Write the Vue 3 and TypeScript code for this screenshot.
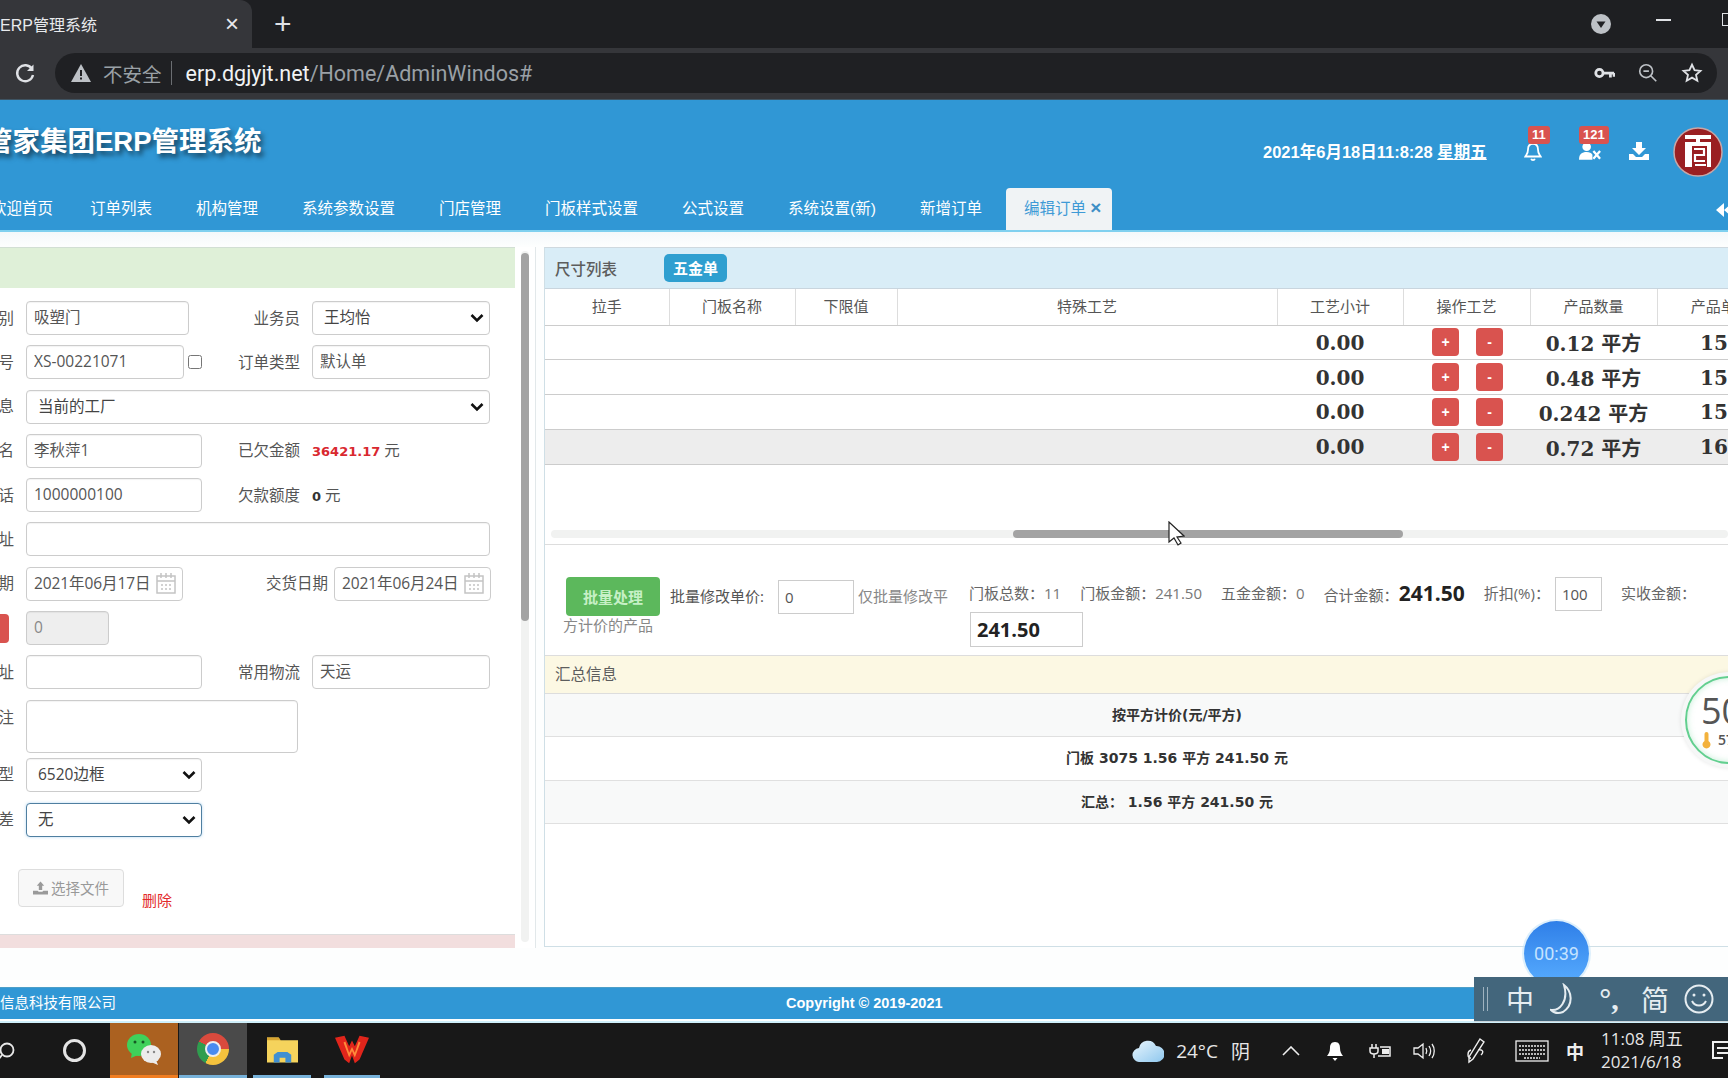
<template>
  <div class="screen">
    <!-- browser chrome -->
    <div class="tabstrip">
      <div class="tab">
        <span class="tab-title">ERP管理系统</span>
        <span class="tab-x">×</span>
      </div>
      <span class="tab-plus">+</span>
      <div class="strip-right">
        <svg class="profile" viewBox="0 0 20 20"><circle cx="10" cy="10" r="10" fill="#bdc1c6" /><path d="M5.5 7.5h9L10 14z" fill="#202124" /></svg>
        <span class="win-min"></span>
        <span class="win-max"></span>
      </div>
    </div>
    <div class="toolbar">
      <svg class="reload" viewBox="0 0 24 24" fill="none" stroke="#dfe1e5" stroke-width="2.4"><path d="M19 8a8 8 0 1 0 1 6" /><path d="M20.5 3.5v6.5h-6.5z" fill="#dfe1e5" stroke="none" /></svg>
      <div class="urlbar">
        <svg class="warn" viewBox="0 0 20 18"><path d="M10 0l10 18H0z" fill="#bdc1c6" /><path d="M9 6h2v6H9zM9 13.5h2v2H9z" fill="#202124" /></svg>
        <span class="insecure">不安全</span>
        <span class="url-sep"></span>
        <span class="url-host">erp.dgjyjt.net</span><span class="url-path">/Home/AdminWindos#</span>
        <div class="url-icons">
          <svg viewBox="0 0 24 24" width="22" height="22" fill="none" stroke="#dfe1e5" stroke-width="3"><circle cx="7" cy="12" r="4" /><path d="M11 12h12M19 12v5M23 12v4" /></svg>
          <svg viewBox="0 0 24 24" width="22" height="22" fill="none" stroke="#bdc1c6" stroke-width="1.8"><circle cx="10" cy="10" r="7" /><path d="M15 15l6 6M7 10h6" /></svg>
          <svg viewBox="0 0 24 24" width="22" height="22" fill="none" stroke="#dfe1e5" stroke-width="2"><path d="M12 3l2.8 6 6.4.7-4.8 4.3 1.4 6.4L12 17.1l-5.8 3.3 1.4-6.4L2.800 9.700 9.200 9z" /></svg>
        </div>
      </div>
    </div>

    <!-- app header -->
    <header class="app-header">
      <div class="hd-top">
        <h1 class="brand">管家集团ERP管理系统</h1>
        <div class="hd-right">
          <span class="clock">2021年6月18日11:8:28 <u>星期五</u></span>
          <span class="hd-icon bell">
            <svg viewBox="0 0 20 22" width="18" height="20" fill="none" stroke="#fff" stroke-width="2"><path d="M10 2c-4 0-5.500 3-5.500 6 0 5-2 6-3 8h17c-1-2-3-3-3-8 0-3-1.500-6-5.500-6zM8 18.500c.5 2 3.500 2 4 0" /></svg>
            <b class="badge">11</b>
          </span>
          <span class="hd-icon user">
            <svg viewBox="0 0 24 18" width="23" height="18" fill="#fff"><circle cx="8" cy="4.500" r="4.500" /><path d="M0 18c0-6 3-8 8-8 3 0 5 1 6 3v5z" /><path d="M15 9l7 8M22 9l-7 8" stroke="#fff" stroke-width="2.400" /></svg>
            <b class="badge">121</b>
          </span>
          <span class="hd-icon dl">
            <svg viewBox="0 0 20 18" width="20" height="18" fill="#fff"><path d="M7 0h6v6h4l-7 7-7-7h4z" /><path d="M0 12h4l3 3h6l3-3h4v6H0z" /></svg>
          </span>
          <svg class="avatar" viewBox="0 0 50 50">
            <circle cx="25" cy="25" r="24" fill="#9a1f22" stroke="#c9a6a6" stroke-width="1.500" />
            <path d="M12 8h26v4H27v3h11v25h-4V19H19v21h-7V15h11v-3H12z" fill="#fff" />
            <path d="M21 22h11M31 22v6H22v6h10M22 38h11" fill="none" stroke="#fff" stroke-width="2.200" />
          </svg>
        </div>
      </div>
      <nav class="nav">
        <a v-for="item in navItems" :key="item" class="nav-item">{{ item }}</a>
        <a class="nav-item active">编辑订单 <b class="nav-x">×</b></a>
        <svg class="nav-back" viewBox="0 0 16 14" width="16" height="14" fill="#fff"><path d="M8 0v14L0 7zM16 0v14L8 7z" /></svg>
      </nav>
    </header>

    <main class="main">
      <!-- order form -->
      <section class="left-panel">
        <div class="left-body">
          <div class="green-head"></div>
          <div class="form">
            <div class="row">
              <label class="lab">别</label>
              <input class="ctl w163" value="吸塑门" readonly />
              <label class="lab2">业务员</label>
              <select class="ctl"><option>王均怡</option></select>
            </div>
            <div class="row">
              <label class="lab">号</label>
              <div class="pair">
                <input class="ctl w158" value="XS-00221071" readonly />
                <input class="chk" type="checkbox" />
              </div>
              <label class="lab2">订单类型</label>
              <input class="ctl" value="默认单" readonly />
            </div>
            <div class="row">
              <label class="lab">息</label>
              <select class="ctl span3"><option>当前的工厂</option></select>
            </div>
            <div class="row">
              <label class="lab">名</label>
              <input class="ctl" value="李秋萍1" readonly />
              <label class="lab2">已欠金额</label>
              <span class="val"><b class="debt">36421.17</b> 元</span>
            </div>
            <div class="row">
              <label class="lab">话</label>
              <input class="ctl" value="1000000100" readonly />
              <label class="lab2">欠款额度</label>
              <span class="val"><b>0</b> 元</span>
            </div>
            <div class="row">
              <label class="lab">址</label>
              <input class="ctl span3" readonly />
            </div>
            <div class="row">
              <label class="lab">期</label>
              <div class="date w157">
                <span>2021年06月17日</span>
                <svg viewBox="0 0 20 22" width="20" height="22" fill="none" stroke="#c4c4c4" stroke-width="1.500"><rect x="1" y="4" width="18" height="17" /><path d="M1 9h18M5 1v5M10 1v5M15 1v5M5 13h2M9 13h2M13 13h2M5 17h2M9 17h2M13 17h2" /></svg>
              </div>
              <div class="date-end">
                <label class="lab3">交货日期</label>
                <div class="date w157">
                  <span>2021年06月24日</span>
                  <svg viewBox="0 0 20 22" width="20" height="22" fill="none" stroke="#c4c4c4" stroke-width="1.500"><rect x="1" y="4" width="18" height="17" /><path d="M1 9h18M5 1v5M10 1v5M15 1v5M5 13h2M9 13h2M13 13h2M5 17h2M9 17h2M13 17h2" /></svg>
                </div>
              </div>
            </div>
            <div class="row">
              <span class="red-stub"></span>
              <input class="ctl w83 disabled" value="0" readonly />
            </div>
            <div class="row">
              <label class="lab">址</label>
              <input class="ctl" readonly />
              <label class="lab2">常用物流</label>
              <input class="ctl" value="天运" readonly />
            </div>
            <div class="row tall">
              <label class="lab top">注</label>
              <textarea class="ctl note" readonly></textarea>
            </div>
            <div class="row tight">
              <label class="lab">型</label>
              <select class="ctl"><option>6520边框</option></select>
            </div>
            <div class="row">
              <label class="lab">差</label>
              <select class="ctl focused"><option>无</option></select>
            </div>
          </div>
          <div class="file-row">
            <button class="file-btn">
              <svg viewBox="0 0 16 14" width="15" height="14" fill="#9a9a9a"><path d="M8 0l4 4.500H9.800V9H6.200V4.500H4zM0 10h5l1 1h4l1-1h5v4H0z" /></svg>
              选择文件
            </button>
            <a class="del">删除</a>
          </div>
          <div class="red-foot"></div>
        </div>
        <div class="v-scroll"><span class="v-thumb"></span></div>
      </section>

      <!-- size list -->
      <section class="right-panel">
        <div class="blue-head">
          <span class="head-title">尺寸列表</span>
          <span class="hw-badge">五金单</span>
        </div>
        <div class="table-wrap">
          <table class="sizes">
            <colgroup>
              <col v-for="(w, i) in colWidths" :key="i" :style="{ width: w + 'px' }" />
            </colgroup>
            <thead>
              <tr><th v-for="h in columns" :key="h">{{ h }}</th></tr>
            </thead>
            <tbody>
              <tr v-for="(r, i) in rows" :key="i" :class="{ hl: i === 3 }">
                <td></td><td></td><td></td><td></td>
                <td class="num">0.00</td>
                <td class="ops"><button class="op">+</button><button class="op">-</button></td>
                <td class="num">{{ r.qty }} <span class="unit">平方</span></td>
                <td class="num price">{{ r.price }}</td>
              </tr>
            </tbody>
          </table>
          <div class="h-scroll"><span class="h-thumb"></span></div>
        </div>

        <div class="batch">
          <div class="batch-left">
            <div class="batch-line">
              <button class="batch-btn">批量处理</button>
              <span class="dark">批量修改单价:</span>
              <input class="box w76" value="0" readonly />
              <span class="muted">仅批量修改平</span>
            </div>
            <div class="muted second">方计价的产品</div>
          </div>
          <div class="batch-right">
            <div class="totals">
              <span>门板总数：<em>11</em></span>
              <span>门板金额：<em>241.50</em></span>
              <span>五金金额：<em>0</em></span>
              <span>合计金额：<b class="big">241.50</b></span>
              <span>折扣(%)：</span>
              <input class="box w47" value="100" readonly />
              <span class="receipt">实收金额：</span>
            </div>
            <input class="box paid" value="241.50" readonly />
          </div>
        </div>

        <div class="yellow-head">汇总信息</div>
        <div class="summary">
          <div class="sum-row stripe">按平方计价(元/平方)</div>
          <div class="sum-row">门板 3075 1.56 平方 241.50 元</div>
          <div class="sum-row stripe">汇总： 1.56 平方 241.50 元</div>
        </div>
      </section>
    </main>

    <footer class="footer">
      <span class="foot-left">信息科技有限公司</span>
      <span class="foot-mid">Copyright © 2019-2021</span>
    </footer>

    <!-- windows taskbar -->
    <div class="taskbar">
      <div class="tb-search">
        <svg viewBox="0 0 20 20" width="20" height="20" fill="none" stroke="#e8e8e8" stroke-width="1.800" class="tb-glass"><circle cx="11" cy="9" r="6.500" /><path d="M6 14l-4 5" /></svg>
        <span class="tb-ring"></span>
      </div>
      <div class="tb-app wechat">
        <svg viewBox="0 0 36 32" width="36" height="32">
          <ellipse cx="13" cy="12" rx="12" ry="11" fill="#3fd15a" />
          <path d="M6 19l-1 6 7-3z" fill="#3fd15a" />
          <circle cx="9" cy="9" r="1.500" fill="#155a24" /><circle cx="17" cy="9" r="1.500" fill="#155a24" />
          <ellipse cx="25" cy="21" rx="10" ry="9" fill="#ececec" />
          <path d="M30 27l2 5-7-3z" fill="#ececec" />
          <circle cx="22" cy="19" r="1.200" fill="#888" /><circle cx="28" cy="19" r="1.200" fill="#888" />
        </svg>
      </div>
      <div class="tb-app chrome-app">
        <span class="chrome-ball"><i></i></span>
      </div>
      <div class="tb-app explorer">
        <svg viewBox="0 0 32 28" width="31" height="28">
          <path d="M0 2h12l2 3h18v23H0z" fill="#f5d35c" />
          <path d="M0 2h12l2 3H0z" fill="#d7a431" />
          <path d="M7 28v-8l4-3h10l4 3v8h-6v-5h-6v5z" fill="#3f8fd2" />
        </svg>
      </div>
      <div class="tb-app wps">
        <svg viewBox="0 0 36 30" width="34" height="30">
          <path d="M0 3l10-2 5 11 3-6 3 6 5-11 10 2-10 23-5 4-3-8-3 8-5-4z" fill="#e1251b" />
          <path d="M11 7l4 12 3-6 3 6 4-12 2 1-6 16-3-7-3 7-6-16z" fill="#ff8a3a" />
        </svg>
      </div>
      <div class="tray">
        <svg class="t-cloud" viewBox="0 0 32 22" width="32" height="22">
          <defs><linearGradient id="cloudFill" x1="0" y1="0" x2="1" y2="1"><stop offset="0" stop-color="#eaf6fd" /><stop offset="1" stop-color="#8ec7ee" /></linearGradient></defs>
          <path d="M8 22a7 7 0 0 1-1-14 9 9 0 0 1 17-2 8 8 0 0 1 1 16z" fill="url(#cloudFill)" />
        </svg>
        <span class="t-temp">24°C</span>
        <span class="t-sky">阴</span>
        <svg class="t-up" viewBox="0 0 18 10" width="18" height="10" fill="none" stroke="#eee" stroke-width="1.600"><path d="M1 9l8-8 8 8" /></svg>
        <svg class="t-bell" viewBox="0 0 18 20" width="18" height="20" fill="#fff"><path d="M9 1c-4 0-5 3-5 6 0 4-1.500 6-3 8h16c-1.500-2-3-4-3-8 0-3-1-6-5-6zM6.500 17h5L9 20z" /></svg>
        <svg class="t-batt" viewBox="0 0 24 16" width="24" height="16" fill="none" stroke="#eee" stroke-width="1.500"><path d="M4 1v4M8 1v4M2 5h8v3c0 2-2 3-4 3s-4-1-4-3zM6 11v4M12 4h10v9H10" /><rect x="14" y="6" width="7" height="5" fill="#eee" stroke="none" /></svg>
        <svg class="t-vol" viewBox="0 0 22 18" width="22" height="18" fill="none" stroke="#eee" stroke-width="1.300"><path d="M1 6h4l5-4v14l-5-4H1zM13 6c1 2 1 4 0 6M16 4c2 3 2 7 0 10M19 2c3 4 3 10 0 14" /></svg>
        <svg class="t-pen" viewBox="0 0 20 26" width="20" height="26" fill="none" stroke="#eee" stroke-width="1.400"><path d="M14 1l4 3-11 17-4 3 0-5zM5 12c-4 1-4 8 0 8M12 12c5-1 6 2 3 5" /></svg>
        <svg class="t-kbd" viewBox="0 0 34 22" width="34" height="22" fill="none" stroke="#eee" stroke-width="1.300"><rect x="1" y="1" width="32" height="20" /><path d="M4 6h26M4 10h26M4 14h26M9 18h16" stroke-dasharray="2 1" /></svg>
        <span class="t-ime">中</span>
        <div class="t-time"><span>11:08 周五</span><span>2021/6/18</span></div>
        <svg class="t-note" viewBox="0 0 20 22" width="20" height="22" fill="none" stroke="#eee" stroke-width="2"><path d="M20 2H2v16h10M6 8h14M6 13h14" /></svg>
      </div>
    </div>

    <!-- floating things on top of the page -->
    <div class="gauge">
      <div class="gauge-ring">
        <span class="gauge-num">50</span>
        <div class="gauge-sub">
          <svg viewBox="0 0 10 18" width="11" height="18"><path d="M3 3a2 2 0 0 1 4 0v7a4 4 0 1 1-4 0z" fill="#f3b23c" /></svg>
          <span>57</span>
        </div>
      </div>
    </div>
    <svg class="cursor" viewBox="0 0 17 25" width="17" height="25"><path d="M1 1v20l5-4 4 7 3-2-4-6 7-1z" fill="#fff" stroke="#222" stroke-width="1.200" /></svg>
    <div class="timer">00:39</div>
    <div class="ime">
      <span class="ime-grip"></span>
      <span class="ime-ch">中</span>
      <svg class="ime-moon" viewBox="0 0 28 32" width="28" height="32" fill="none" stroke="#e6edf1" stroke-width="2"><path d="M14 2c8 6 10 20-1 27-5 2-9 1-12-2 8 1 18-8 13-25z" /></svg>
      <span class="ime-punc">°,</span>
      <span class="ime-ch ime-jian">简</span>
      <svg class="ime-smile" viewBox="0 0 30 30" width="30" height="30" fill="none" stroke="#e6edf1" stroke-width="2"><circle cx="15" cy="15" r="13.500" /><path d="M8 17c3 6 11 6 14 0" /><circle cx="10" cy="11" r="1.500" fill="#e6edf1" stroke="none" /><circle cx="20" cy="11" r="1.500" fill="#e6edf1" stroke="none" /></svg>
    </div>
  </div>
</template>

<script setup lang="ts">
const navItems: string[] = [
  '欢迎首页', '订单列表', '机构管理', '系统参数设置', '门店管理',
  '门板样式设置', '公式设置', '系统设置(新)', '新增订单',
]

const columns: string[] = ['拉手', '门板名称', '下限值', '特殊工艺', '工艺小计', '操作工艺', '产品数量', '产品单价']
const colWidths: number[] = [124, 126, 102, 380, 126, 127, 127, 127]

const rows: { qty: string; price: string }[] = [
  { qty: '0.12', price: '15' },
  { qty: '0.48', price: '15' },
  { qty: '0.242', price: '15' },
  { qty: '0.72', price: '16' },
]
</script>

<style>
html, body { margin: 0; background: #fff; overflow: hidden; }
</style>

<style scoped>
.screen {
  position: relative;
  width: 1728px;
  height: 1080px;
  overflow: hidden;
  display: flex;
  flex-direction: column;
  font-family: "Open Sans", "Noto Sans CJK SC", sans-serif;
  font-size: 15.5px;
  color: #555;
  background: #fcfefe;
}

/* chrome */
.tabstrip {
  height: 48px;
  flex: none;
  background: #1e1f22;
  display: flex;
  align-items: center;
}
.tab {
  width: 252px;
  height: 48px;
  box-sizing: border-box;
  background: #35363a;
  border-radius: 0 12px 0 0;
  display: flex;
  align-items: center;
  justify-content: space-between;
  padding: 0 13px 0 0;
  color: #e8eaed;
}
.tab-title { font: 16px "Liberation Sans", "Noto Sans CJK SC", sans-serif; }
.tab-x { font: 24px "Liberation Sans", sans-serif; }
.tab-plus { margin-left: 22px; font: 30px "Liberation Sans", sans-serif; color: #dfe1e5; }
.strip-right { margin-left: auto; display: flex; align-items: center; }
.profile { width: 20px; height: 20px; margin-right: 45px; }
.win-min { width: 15px; height: 2px; background: #dfe1e5; margin: -8px 51px 0 0; }
.win-max { width: 10px; height: 11px; border: 1.500px solid #dfe1e5; margin: -10px -6px 0 0; }

.toolbar {
  height: 52px;
  flex: none;
  box-sizing: border-box;
  background: #35363a;
  border-bottom: 1px solid #3e5463;
  padding: 5px 11px 6px 55px;
  position: relative;
}
.reload { position: absolute; left: 13px; top: 13px; width: 24px; height: 24px; }
.urlbar {
  height: 40px;
  background: #1f2023;
  border-radius: 20px;
  display: flex;
  align-items: center;
  padding-left: 16px;
  font: 21.500px "Roboto", "Noto Sans CJK SC", sans-serif;
}
.warn { width: 20px; height: 18px; margin-right: 12px; }
.insecure { color: #9aa0a6; font-size: 19.500px; }
.url-sep { width: 1px; height: 24px; background: #6b6e72; margin: 0 14px 0 9px; }
.url-host { color: #f1f3f4; }
.url-path { color: #9aa0a6; }
.url-icons { margin-left: auto; display: flex; gap: 22px; padding-right: 14px; }

/* app header */
.app-header {
  height: 132px;
  flex: none;
  box-sizing: border-box;
  background: #3097d5;
  border-bottom: 2px solid #7fd0ef;
  display: flex;
  flex-direction: column;
}
.hd-top { height: 88px; display: flex; justify-content: space-between; }
.brand {
  margin: 26px 0 0 -15px;
  font-size: 27.500px;
  line-height: 32px;
  font-weight: 700;
  color: #fff;
  text-shadow: 3px 4px 5px rgba(0, 0, 0, 0.55);
  font-family: "Liberation Sans", "Noto Sans CJK SC", sans-serif;
}
.hd-right { display: flex; align-items: flex-start; padding-top: 27px; padding-right: 5px; }
.clock {
  margin-top: 14px;
  color: #fff;
  font: 700 16.500px/22px "Liberation Sans", "Noto Sans CJK SC", sans-serif;
  width: 223px;
  white-space: nowrap;
}
.hd-icon { position: relative; display: block; margin-top: 15px; }
.hd-icon svg { display: block; }
.bell { margin-left: 38px; width: 18px; }
.user { margin-left: 37px; width: 23px; }
.dl { margin-left: 27px; width: 20px; }
.badge {
  position: absolute;
  top: -16px;
  left: 4px;
  padding: 0 4px;
  height: 18px;
  line-height: 18px;
  border-radius: 3px;
  background: #d9534f;
  color: #fff;
  font: 700 13px/18px "Liberation Sans", sans-serif;
}
.user .badge { left: 0; }
.avatar { width: 50px; height: 50px; margin-left: 24px; }

.nav { height: 42px; display: flex; align-items: stretch; margin-left: -31px; position: relative; }
.nav-item {
  padding: 0 22px;
  color: #fff;
  font: 15.500px/42px "Liberation Sans", "Noto Sans CJK SC", sans-serif;
  white-space: nowrap;
}
.nav-item:first-child { padding-right: 15px; }
.nav-item.active {
  margin-left: 2px;
  padding: 0 11px 0 18px;
  background: #f0f3f5;
  color: #3e9ad6;
  border-radius: 4px 4px 0 0;
}
.nav-x { color: #3e8fc6; font-size: 19px; line-height: 1; }
.nav-back { position: absolute; left: 1747px; top: 15px; }

/* main area */
.main {
  height: 755px;
  flex: none;
  box-sizing: border-box;
  padding-top: 15px;
  display: flex;
  background: linear-gradient(#f3f8fa, #fdfefe 14px);
}
.left-panel {
  width: 536px;
  height: 701px;
  flex: none;
  display: flex;
  background: #fff;
  border-right: 1px solid #e2e8ea;
  box-sizing: border-box;
}
.left-body { width: 515px; display: flex; flex-direction: column; }
.green-head { height: 41px; flex: none; background: #dff0d8; border-top: 1px solid #d2dfd4; box-sizing: border-box; }
.form { padding-top: 13px; }
.row {
  display: grid;
  grid-template-columns: 26px 176px 110px 178px;
  align-items: center;
  height: 34px;
  margin-bottom: 10.300px;
}
.row.tall { height: 53px; align-items: start; margin-bottom: 5px; }
.row.tight { margin-bottom: 11px; }
.lab { text-align: right; padding-right: 12px; margin-left: -13px; margin-top: -2px; white-space: nowrap; }
.lab.top { padding-top: 7px; }
.lab2 { text-align: right; padding-right: 12px; margin-top: -2px; white-space: nowrap; }
.lab3 { padding-right: 6px; margin-top: -2px; white-space: nowrap; }
.ctl {
  box-sizing: border-box;
  width: 100%;
  height: 34px;
  padding: 4px 7px 7px;
  border: 1px solid #ccc;
  border-radius: 4px;
  background: #fff;
  font: 15.500px "Open Sans", "Noto Sans CJK SC", sans-serif;
  color: #555;
  box-shadow: inset 0 1px 1px rgba(0, 0, 0, 0.05);
  outline: none;
}
select.ctl {
  appearance: none;
  padding-left: 11px;
  color: #444;
  background: #fff url("data:image/svg+xml,%3Csvg xmlns='http://www.w3.org/2000/svg' viewBox='0 0 14 10'%3E%3Cpath d='M1.500 2L7 7.500 12.500 2' fill='none' stroke='%23111' stroke-width='2.600'/%3E%3C/svg%3E") no-repeat right 5px center / 14px 10px;
}
.span3 { grid-column: 2 / span 3; }
.w163 { width: 163px; }
.w158 { width: 158px; flex: none; }
.w83 { width: 83px; }
.pair { display: flex; align-items: center; gap: 4px; }
.chk { width: 14px; height: 14px; margin: 0; }
.val { color: #555; white-space: nowrap; grid-column: 4; margin-top: -2px; }
.val b { color: #333; font: 700 13px "DejaVu Sans", sans-serif; }
.val .debt { color: #d9282f; }
.date {
  box-sizing: border-box;
  height: 34px;
  border: 1px solid #ccc;
  border-radius: 4px;
  display: flex;
  align-items: center;
  justify-content: space-between;
  padding: 0 6px 2px 7px;
  white-space: nowrap;
  letter-spacing: -0.1px;
}
.w157 { width: 157px; }
.date-end { grid-column: 3 / span 2; display: flex; align-items: center; justify-content: flex-end; margin-right: -1px; }
.red-stub { width: 9px; height: 29px; border-radius: 0 4px 4px 0; background: #d9534f; }
.disabled { background: #eee; color: #888; }
.note { grid-column: 2 / span 2; width: 272px; height: 53px; resize: none; }
.focused { border-color: #4f7fa0; box-shadow: 0 0 3px rgba(102, 175, 233, 0.5); }
.file-row { display: flex; align-items: flex-start; padding: 22px 0 0 18px; height: 76px; box-sizing: border-box; }
.file-btn {
  width: 106px;
  height: 38px;
  box-sizing: border-box;
  display: flex;
  align-items: center;
  justify-content: center;
  gap: 3px;
  background: #f8f8f8;
  border: 1px solid #ddd;
  border-radius: 4px;
  color: #999;
  font: 14.500px "Open Sans", "Noto Sans CJK SC", sans-serif;
}
.del { margin: 20px 0 0 18px; color: #e32b2b; font-size: 15px; }
.red-foot { margin-top: auto; height: 14px; flex: none; background: #f2dede; border-top: 1px solid #ddd; box-sizing: border-box; }
.v-scroll {
  width: 20px;
  margin-top: 4px;
  margin-bottom: 6px;
  display: flex;
  justify-content: center;
  position: relative;
}
.v-scroll::before { content: ""; position: absolute; left: 6px; width: 8px; top: 0; bottom: 0; background: #f1f2f1; border-radius: 4px; }
.v-thumb { position: relative; width: 8px; height: 368px; margin-top: 2px; background: #a3a3a3; border-radius: 4px; }

.right-panel {
  margin-left: 8px;
  width: 1184px;
  height: 700px;
  flex: none;
  box-sizing: border-box;
  border-left: 1px solid #cfdfe6;
  border-top: 1px solid #cfd9df;
  border-bottom: 1px solid #cfdfe6;
  background: #fff;
  overflow: hidden;
}
.blue-head {
  height: 41px;
  box-sizing: border-box;
  background: #d9edf7;
  border-bottom: 1px solid #c9d5de;
  display: flex;
  align-items: center;
  padding-left: 10px;
}
.head-title { font-size: 15.500px; color: #5d5d5d; font-weight: 500; }
.hw-badge {
  margin-left: 47px;
  width: 63px;
  height: 28px;
  border-radius: 5px;
  background: #2f9fd0;
  color: #fff;
  text-align: center;
  font: 700 15px/28px "Noto Sans CJK SC", sans-serif;
}
.table-wrap { height: 256px; box-sizing: border-box; border-bottom: 1px solid #ddd; position: relative; }
.sizes { border-collapse: collapse; table-layout: fixed; width: 1239px; }
.sizes th {
  height: 36px;
  padding: 0 0 2px;
  box-sizing: border-box;
  border-left: 1px solid #ddd;
  border-bottom: 1px solid #ccc;
  font-weight: 400;
  font-size: 15px;
  color: #555;
  white-space: nowrap;
}
.sizes th:first-child { border-left: none; }
.sizes td {
  height: 34.800px;
  padding: 0;
  box-sizing: border-box;
  border-bottom: 1px solid #ccc;
  text-align: center;
}
.sizes td.num { padding-top: 1px; }
.sizes .hl td { background: #ededed; }
.num { font: 700 20px "DejaVu Serif", "Noto Sans CJK SC", serif; color: #333; white-space: nowrap; }
.unit { font-family: "Noto Sans CJK SC", sans-serif; font-size: 20px; font-weight: 700; }
.sizes td.price { text-align: left; padding-left: 43px; }
.sizes td.ops { white-space: nowrap; padding-left: 2px; }
.op {
  width: 27px;
  height: 28px;
  padding: 0;
  border: none;
  border-radius: 4px;
  background: #d9534f;
  color: #fff;
  font: 700 14px "Liberation Sans", sans-serif;
  vertical-align: middle;
}
.op + .op { margin-left: 17px; }
.h-scroll { position: absolute; left: 6px; right: 0; top: 241px; height: 8px; border-radius: 4px; background: #f1f2f1; }
.h-thumb { position: absolute; left: 462px; width: 390px; height: 8px; border-radius: 4px; background: #a3a3a3; }

.batch { height: 110px; box-sizing: border-box; display: flex; padding-top: 32px; }
.batch-left { width: 423px; flex: none; }
.batch-line { display: flex; align-items: center; padding-left: 21px; white-space: nowrap; }
.batch-btn {
  width: 94px;
  height: 39px;
  flex: none;
  padding: 0;
  border: none;
  border-radius: 4px;
  background: #5cb85c;
  color: #c6f0c6;
  font: 700 15px "Noto Sans CJK SC", sans-serif;
}
.dark { margin-left: 10px; color: #555; font-size: 15px; }
.muted { color: #888; font-size: 15px; }
.batch-line .muted { margin-left: 4px; }
.batch-line .dark, .batch-line .muted { margin-top: -3px; }
.second { padding-left: 18px; margin-top: -1px; line-height: 20px; }
.box {
  box-sizing: border-box;
  height: 34px;
  border: 1px solid #ccc;
  background: #fff;
  padding: 0 6px;
  font: 15px "Open Sans", sans-serif;
  color: #555;
  outline: none;
}
.w76 { width: 76px; margin-left: 14px; }
.w47 { width: 47px; }
.batch-right { flex: 1; padding-left: 1px; }
.totals { display: flex; align-items: center; height: 34px; gap: 19px; white-space: nowrap; color: #666; font-size: 15px; }
.totals > span { margin-top: -3px; }
.totals em { font-style: normal; color: #777; }
.big { font: 700 21px "Open Sans", sans-serif; color: #222; }
.totals .w47 { margin-left: -14px; }
.paid {
  display: block;
  margin: 1px 0 0 1px;
  width: 113px;
  height: 35px;
  font: 700 20px "Open Sans", sans-serif;
  color: #222;
}
.yellow-head {
  height: 39px;
  box-sizing: border-box;
  background: #fcf8e3;
  border-top: 1px solid #ddd;
  border-bottom: 1px solid #ddd;
  padding-left: 10px;
  font-size: 15.500px;
  line-height: 37px;
  color: #5d5d5d;
}
.summary { width: 1264px; }
.sum-row {
  height: 43.300px;
  box-sizing: border-box;
  border-bottom: 1px solid #e0e0e0;
  text-align: center;
  font: 700 14px/42px "DejaVu Sans", "Noto Sans CJK SC", sans-serif;
  color: #333;
}
.sum-row.stripe { background: #f8f9f9; }

.footer {
  height: 32px;
  flex: none;
  box-sizing: border-box;
  background: #3097d5;
  color: #fff;
  position: relative;
  font: 700 14.500px/30px "Liberation Sans", "Noto Sans CJK SC", sans-serif;
  border-top: 1px solid #4d9fc8;
}
.foot-left { font-weight: 400; }
.foot-mid { position: absolute; left: 786px; }

.taskbar {
  height: 57px;
  flex: none;
  box-sizing: border-box;
  border-top: 2px solid #cfeffa;
  background: #181818;
  display: flex;
  color: #eee;
  margin-top: 2px;
}
.tb-search { width: 110px; flex: none; position: relative; display: flex; align-items: center; }
.tb-glass { margin-left: -4px; }
.tb-ring { width: 17px; height: 17px; border: 3px solid #e4e4e4; border-radius: 50%; margin-left: 47px; }
.tb-app {
  width: 68px;
  flex: none;
  display: flex;
  align-items: center;
  justify-content: center;
  box-sizing: border-box;
  border-bottom: 3px solid #76b1d9;
}
.wechat { background: #ab6120; border-bottom-color: #f07d20; }
.chrome-app { background: #4a4a4a; margin-left: 1px; }
.explorer { width: 58px; margin-left: 6px; }
.wps { width: 56px; margin-left: 13px; }
.chrome-ball {
  width: 32px;
  height: 32px;
  border-radius: 50%;
  background: conic-gradient(#d94a3d 0 25%, #f4c23d 25% 58%, #2f9d4e 58% 83%, #d94a3d 83%);
  display: flex;
  align-items: center;
  justify-content: center;
}
.chrome-ball i { width: 12px; height: 12px; border-radius: 50%; background: #4a8bf0; border: 2.500px solid #eee; }
.tray {
  margin-left: auto;
  display: flex;
  align-items: center;
  height: 55px;
}
.tray > * { flex: none; }
.t-temp, .t-sky { font: 19px "Open Sans", "Noto Sans CJK SC", sans-serif; color: #e6e6e6; }
.t-temp { margin-left: 12px; }
.t-sky { margin-left: 13px; }
.t-up { margin-left: 32px; }
.t-bell { margin-left: 26px; }
.t-batt { margin-left: 24px; }
.t-vol { margin-left: 21px; }
.t-pen { margin-left: 31px; }
.t-kbd { margin-left: 29px; }
.t-ime { margin-left: 17px; font: 700 18px "Noto Sans CJK SC", sans-serif; }
.t-time {
  margin-left: 17px;
  width: 88px;
  display: flex;
  flex-direction: column;
  gap: 3px;
  font: 17px/20px "Open Sans", "Noto Sans CJK SC", sans-serif;
  color: #e6e6e6;
  white-space: nowrap;
}
.t-note { margin-left: 22px; margin-right: -3px; }

.gauge {
  position: absolute;
  left: 1681px;
  top: 672px;
  width: 96px;
  height: 96px;
  border-radius: 50%;
  background: #f6f7f7;
  box-shadow: 0 0 4px rgba(0, 0, 0, 0.1);
  display: flex;
  align-items: center;
  justify-content: center;
}
.gauge-ring {
  width: 88px;
  height: 88px;
  box-sizing: border-box;
  border: 2px solid #62cf8f;
  border-radius: 50%;
  background: #fff;
  box-shadow: inset 0 0 6px rgba(98, 207, 143, 0.35);
  padding: 14px 0 0 14px;
  color: #555;
}
.gauge-num { display: block; font: 36px/38px "Open Sans", sans-serif; }
.gauge-sub { display: flex; align-items: center; gap: 6px; font: 600 14px "Open Sans", sans-serif; }
.cursor { position: absolute; left: 1168px; top: 521px; }
.timer {
  position: absolute;
  left: 1524px;
  top: 921px;
  width: 65px;
  height: 65px;
  border-radius: 50%;
  background: linear-gradient(#2f7fe8, #58adff);
  box-shadow: 0 0 0 2px rgba(200, 230, 250, 0.6);
  color: #c5e3ff;
  text-align: center;
  font: 18px/65px "Roboto", sans-serif;
}
.ime {
  position: absolute;
  left: 1474px;
  top: 977px;
  width: 254px;
  height: 45px;
  background: #43667c;
  color: #e6edf1;
  display: flex;
  align-items: center;
  padding-left: 9px;
  box-sizing: border-box;
  border-bottom: 1px solid #c8d4da;
}
.ime > * { flex: none; }
.ime-grip { width: 3px; height: 24px; border-left: 1px solid #9fb3c0; border-right: 1px solid #9fb3c0; margin-right: 18px; }
.ime-ch { font: 28px/1 "Noto Sans CJK SC", sans-serif; }
.ime-moon { margin-left: 16px; }
.ime-punc { font: 700 30px/1 "Liberation Serif", serif; width: 28px; margin-left: 17px; text-align: center; }
.ime-jian { margin-left: 18px; }
.ime-smile { margin-left: 15px; }
</style>
